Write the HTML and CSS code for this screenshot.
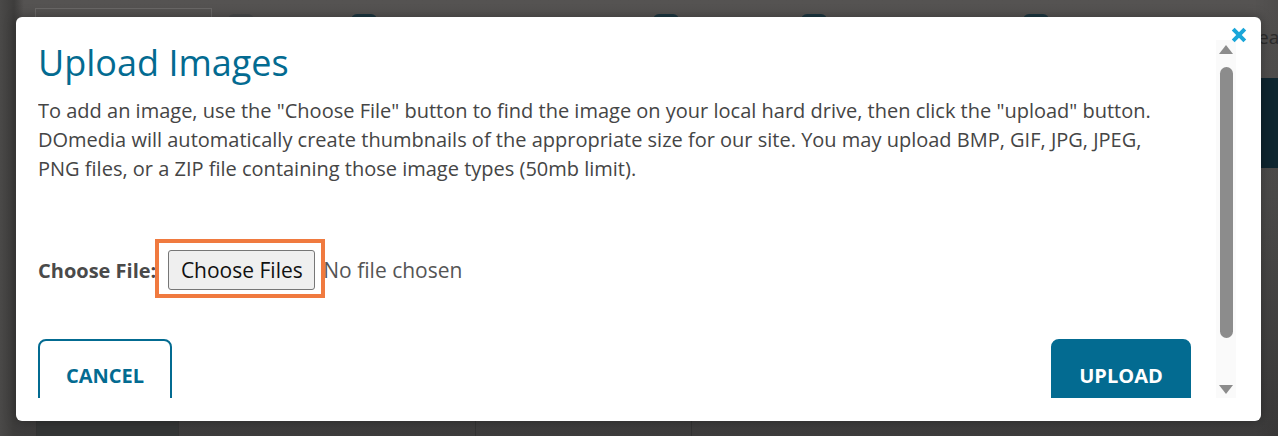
FILE: index.html
```html
<!DOCTYPE html>
<html lang="en">
<head>
<meta charset="utf-8">
<title>Upload Images</title>
<link rel="stylesheet" href="styles.css">
</head>
<body>
<div class="page">
  <div class="page-top">
    <div class="search-box"></div>
    <div class="chip chip-a"></div>
    <div class="chip chip-b"></div>
    <div class="chip chip-c"></div>
    <div class="chip chip-d"></div>
    <div class="chip chip-e"></div>
    <span class="page-word">ea</span>
  </div>
  <div class="page-side"></div>
  <div class="page-bottom">
    <div class="cell cell-dark"></div>
    <div class="cell cell-1"></div>
    <div class="cell cell-2"></div>
    <div class="cell cell-3"></div>
  </div>
</div>

<div class="modal">
  <button class="close" aria-label="Close">
    <svg width="16" height="16" viewBox="0 0 16 16"><path d="M2.2 2.2 L13.8 13.8 M13.8 2.2 L2.2 13.8" stroke="#1aa6d9" stroke-width="4" stroke-linecap="butt"/></svg>
  </button>
  <div class="modal-inner">
    <div class="modal-body">
      <h1 class="title">Upload Images</h1>
      <p class="intro">To add an image, use the "Choose File" button to find the image on your local hard drive, then click the "upload" button. DOmedia will automatically create thumbnails of the appropriate size for our site. You may upload BMP, GIF, JPG, JPEG, PNG&nbsp;files, or a ZIP file containing those image types (50mb limit).</p>
      <div class="file-row">
        <label class="file-label">Choose File:</label>
        <span class="file-control">
          <button class="file-btn">Choose Files</button>
        </span>
        <span class="file-none">No file chosen</span>
      </div>
      <div class="actions">
        <button class="btn btn-cancel">CANCEL</button>
        <button class="btn btn-upload">UPLOAD</button>
      </div>
    </div>
    <div class="scrollbar">
      <div class="arrow arrow-up"></div>
      <div class="thumb"></div>
      <div class="arrow arrow-down"></div>
    </div>
  </div>
</div>
</body>
</html>
```

FILE: styles.css
```css
* { box-sizing: border-box; }
html, body { margin: 0; padding: 0; }
body {
  width: 1278px;
  height: 436px;
  overflow: hidden;
  font-family: "Open Sans", "Liberation Sans", sans-serif;
  background: #4a4948;
  position: relative;
}

/* dimmed page behind the modal */
.page {
  width: 1278px;
  height: 436px;
  background: linear-gradient(180deg, #555352 0%, #4f4e4d 45%, #3d3c3c 100%);
  display: flex;
  flex-direction: column;
  justify-content: space-between;
  position: relative;
}
.page::before {
  content: "";
  position: absolute;
  inset: 0;
  background: linear-gradient(90deg, #4a4948 0px, #3e3d3c 14px, rgba(0,0,0,0) 24px, rgba(0,0,0,0) 1254px, rgba(0,0,0,0.08) 1278px);
}
.page-top {
  height: 30px;
  display: flex;
  align-items: flex-start;
  padding-left: 35px;
  position: relative;
}
.search-box {
  width: 177px;
  height: 26px;
  margin-top: 8px;
  border: 1px solid #6a6867;
}
.chip {
  width: 26px;
  height: 20px;
  margin-top: 14px;
  border-radius: 6px;
  background: #4a4b4c;
}
.chip-a { margin-left: 16px; }
.chip-b { margin-left: 97px; background: #1c3640; }
.chip-c { margin-left: 276px; background: #1c3640; }
.chip-d { margin-left: 122px; background: #1c3640; }
.chip-e { margin-left: 196px; background: #1c3640; }
.page-word {
  position: absolute;
  left: 1258px;
  top: 24px;
  font-size: 19px;
  color: #2b2b2b;
}
.page-side {
  position: absolute;
  left: 1261px;
  top: 78px;
  width: 17px;
  height: 90px;
  background: #0f2630;
}
.page-bottom {
  height: 16px;
  display: flex;
  padding-left: 36px;
  position: relative;
}
.cell { height: 16px; border-left: 1px solid #333; }
.cell-dark { width: 142px; background: #343636; }
.cell-1 { width: 297px; }
.cell-2 { width: 216px; }
.cell-3 { flex: 1; }

/* modal */
.modal {
  position: absolute;
  left: 16px;
  top: 17px;
  width: 1245px;
  height: 404px;
  background: #fff;
  border-radius: 6px;
  padding: 20px 25px 23px 22px;
  box-shadow: 0 0 12px rgba(0,0,0,0.35);
}
.close {
  position: absolute;
  right: 14px;
  top: 10px;
  width: 16px;
  height: 16px;
  padding: 0;
  border: 0;
  background: none;
  display: block;
}
.close svg { display: block; }
.modal-inner {
  display: flex;
  height: 361px;
}
.modal-body {
  flex: 1;
  overflow: hidden;
  padding-top: 4px;
  color: #444;
}
.title {
  margin: 0;
  font-size: 36px;
  line-height: 44px;
  font-weight: 400;
  color: #036b91;
}
.intro {
  margin: 11px 0 0;
  font-size: 20px;
  line-height: 29px;
  color: #454545;
}
.file-row {
  display: flex;
  align-items: center;
  margin-top: 67px;
  height: 40px;
}
.file-label {
  font-size: 20px;
  font-weight: 700;
  color: #4a4a4a;
}
.file-control {
  position: relative;
  margin-left: 12px;
  display: inline-flex;
}
.file-control::after {
  content: "";
  position: absolute;
  left: -13px;
  top: -11px;
  right: -10px;
  bottom: -8px;
  border: 4px solid #f07a3f;
  pointer-events: none;
}
.file-btn {
  font-family: "Open Sans", "Liberation Sans", sans-serif;
  font-size: 21px;
  line-height: 26px;
  height: 40px;
  width: 147px;
  padding: 0;
  color: #111;
  background: #efefef;
  border: 1px solid #767676;
  border-radius: 3px;
}
.file-none {
  margin-left: 8px;
  font-size: 21px;
  color: #555;
}
.actions {
  display: flex;
  justify-content: space-between;
  margin-top: 49px;
  padding-right: 25px;
}
.btn {
  font-family: "Open Sans", "Liberation Sans", sans-serif;
  font-size: 20px;
  font-weight: 700;
  height: 74px;
  padding: 0 0 2px;
  border-radius: 8px;
}
.btn-cancel {
  width: 134px;
  background: #fff;
  color: #036b91;
  border: 2px solid #036b91;
}
.btn-upload {
  width: 140px;
  background: #036b91;
  color: #fff;
  border: 2px solid #036b91;
}

/* scrollbar */
.scrollbar {
  width: 20px;
  flex: none;
  margin-top: 3px;
  background: #fafafa;
  display: flex;
  flex-direction: column;
  align-items: center;
  padding: 5px 0 4px;
}
.arrow {
  width: 0;
  height: 0;
  border-left: 7px solid transparent;
  border-right: 7px solid transparent;
}
.arrow-up { border-bottom: 9px solid #8c8c8c; }
.arrow-down { border-top: 9px solid #8c8c8c; margin-top: auto; }
.thumb {
  width: 13px;
  height: 271px;
  margin-top: 13px;
  border-radius: 7px;
  background: #8c8c8c;
}
```
